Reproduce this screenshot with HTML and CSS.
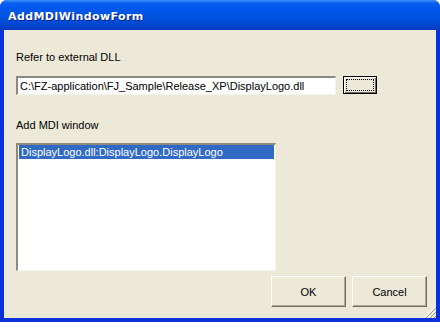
FILE: index.html
```html
<!DOCTYPE html>
<html lang="en">
<head>
    <meta charset="utf-8">
    <title>AddMDIWindowForm</title>
    <link rel="stylesheet" href="styles.css">
</head>
<body>
    <div class="vindue">
        <div class="titel">AddMDIWindowForm</div>
        <div class="indhold">
            <p class="label forste">Refer to external DLL</p>
            <div class="sti-raekke">
                <div class="tekstfelt">C:\FZ-application\FJ_Sample\Release_XP\DisplayLogo.dll</div>
                <button class="knap gennemse"><span class="fokus"></span></button>
            </div>
            <p class="label">Add MDI window</p>
            <div class="liste">
                <div class="valgt">DisplayLogo.dll:DisplayLogo.DisplayLogo</div>
            </div>
            <div class="knapper">
                <button class="knap stor">OK</button>
                <button class="knap stor">Cancel</button>
            </div>
            <div class="greb">
                <svg width="12" height="12" viewBox="0 0 12 12">
                    <path d="M11 1 L1 11 M11 5 L5 11 M11 9 L9 11" stroke="#fff" stroke-width="1"/>
                    <path d="M12 2 L2 12 M12 6 L6 12 M12 10 L10 12" stroke="#a19d8b" stroke-width="1"/>
                </svg>
            </div>
        </div>
    </div>
</body>
</html>
```

FILE: styles.css
```css
body {
    margin: 0;
    background-color: #ffffff;
}

.vindue {
    width: 440px;
    height: 322px;
    display: flex;
    flex-direction: column;
    background-color: #0831d9;
    border-radius: 7px 7px 0 0;
    overflow: hidden;
}

.titel {
    height: 30px;
    flex: none;
    padding-left: 8px;
    color: #ffffff;
    font-family: "DejaVu Sans", sans-serif;
    font-weight: bold;
    font-size: 11px;
    letter-spacing: 0.4px;
    line-height: 33px;
    text-shadow: 1px 1px 0 #0a1e8c;
    background: linear-gradient(to bottom, #3d95ff 0px, #0a5fee 3px, #0058ee 8px, #0054e3 16px, #0046cf 25px, #0a3fc4 28px, #003ac1 30px);
}

.indhold {
    position: relative;
    flex: 1;
    margin: 0 4px 4px 4px;
    padding: 0 9px 0 12px;
    background-color: #ece9d8;
    display: flex;
    flex-direction: column;
    font-family: "Liberation Sans", Arial, sans-serif;
    font-size: 11px;
    color: #000000;
}

.label {
    margin: 0;
    height: 13px;
    line-height: 13px;
}

.forste {
    margin-top: 21px;
    margin-bottom: 12px;
}

.sti-raekke {
    display: flex;
    align-items: flex-start;
    margin-bottom: 24px;
}

.tekstfelt {
    box-sizing: border-box;
    width: 320px;
    height: 19px;
    padding: 2px 2px;
    line-height: 13px;
    background-color: #ffffff;
    border-top: 2px solid #8c8a80;
    border-left: 2px solid #8c8a80;
    border-right: 1px solid #f4f3ee;
    border-bottom: 1px solid #f4f3ee;
    white-space: nowrap;
    overflow: hidden;
}

.knap {
    box-sizing: border-box;
    background-color: #ece9d8;
    font-family: "Liberation Sans", Arial, sans-serif;
    font-size: 11px;
    color: #000000;
    padding: 0;
    border-top: 1px solid #ffffff;
    border-left: 1px solid #ffffff;
    border-right: 1px solid #716f64;
    border-bottom: 1px solid #716f64;
    box-shadow: inset -1px -1px 0 #aca899;
}

.gennemse {
    width: 34px;
    height: 18px;
    margin-left: 7px;
    border: 1px solid #000000;
    box-shadow: inset 1px 1px 0 #ffffff, inset -1px -1px 0 #716f64;
    display: flex;
    align-items: center;
    justify-content: center;
}

.fokus {
    width: 26px;
    height: 10px;
    border: 1px dotted #000000;
}

.liste {
    box-sizing: border-box;
    width: 260px;
    height: 128px;
    margin-top: 11px;
    padding: 0 1px;
    background-color: #ffffff;
    border-top: 2px solid #8c8a80;
    border-left: 2px solid #8c8a80;
    border-right: 1px solid #f4f3ee;
    border-bottom: 1px solid #f4f3ee;
}

.valgt {
    height: 14px;
    line-height: 14px;
    padding-left: 2px;
    background-color: #316ac5;
    color: #ffffff;
}

.knapper {
    display: flex;
    justify-content: flex-end;
    gap: 6px;
    margin-top: 5px;
}

.stor {
    width: 75px;
    height: 31px;
}

.greb {
    position: absolute;
    right: 0;
    bottom: 0;
    width: 12px;
    height: 12px;
}
```
